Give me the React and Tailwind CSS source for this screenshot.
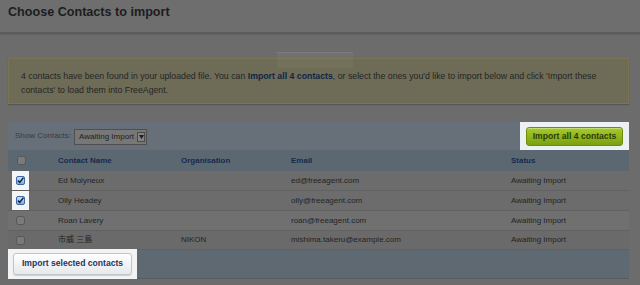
const contacts = [
  { name: 'Ed Molyneux', org: '', email: 'ed@freeagent.com', checked: true },
  { name: 'Olly Headey', org: '', email: 'olly@freeagent.com', checked: true },
  { name: 'Roan Lavery', org: '', email: 'roan@freeagent.com', checked: false },
  { name: '市威 三島', org: 'NIKON', email: 'mishima.takeru@example.com', checked: false },
];

function CheckBox({ checked }) {
  if (checked) {
    return (
      <svg width="9" height="9" viewBox="0 0 9 9">
        <defs>
          <linearGradient id="cbg" x1="0" y1="0" x2="0" y2="1">
            <stop offset="0" stopColor="#cfe2f8" />
            <stop offset="1" stopColor="#7fa9dc" />
          </linearGradient>
        </defs>
        <rect x="0.5" y="0.5" width="8" height="8" rx="1.5" fill="url(#cbg)" stroke="#3a68a8" />
        <path d="M2 4.6 L3.8 6.4 L7.4 1.6" fill="none" stroke="#142238" strokeWidth="1.5" />
      </svg>
    );
  }
  return (
    <svg width="9" height="9" viewBox="0 0 9 9">
      <rect x="0.5" y="0.5" width="8" height="8" rx="2" fill="#7a7a7a" stroke="#575757" />
    </svg>
  );
}

const cols = 'grid grid-cols-[50px_123px_110px_220px_1fr] items-center';

export default function App() {
  return (
    <div className="relative w-[640px] h-[285px] overflow-hidden bg-[#6c6c6c] text-[#242424] font-['Liberation_Sans','Noto_Sans_CJK_JP',sans-serif]">
      <header className="h-[33px] bg-[#6e6e6e] border-b border-[#5c5c5c] shadow-[0_1px_2px_rgba(0,0,0,0.25)] flex items-center px-2">
        <h1 className="text-[12.6px] font-bold text-[#1d1d1d] -mt-[8px]">Choose Contacts to import</h1>
      </header>

      {/* faint flash tab */}
      <div className="absolute left-[277px] top-[52px] w-[76px] h-[16px] bg-white/[0.04] border-t border-white/[0.08] z-10" />

      <div className="mx-2 mt-[25px] w-[621px] h-[46px] bg-[#6e6c56] border border-[#78754f] shadow-[0_1px_1px_rgba(0,0,0,0.2)] px-[12px] pt-[10px] text-[8.75px] leading-[14px] text-[#252525]">
        4 contacts have been found in your uploaded file. You can{' '}
        <span className="font-bold text-[#102548]">Import all 4 contacts</span>, or select the ones you'd like to import below and click 'Import these
        <br />
        contacts' to load them into FreeAgent.
      </div>

      <div className="ml-2 mt-[18px] w-[621px]">
        <div className="h-[28px] bg-[#677078] flex items-center justify-between pl-[7px]">
          <div className="flex items-center text-[8px] text-[#363c42]">
            <span>Show Contacts:</span>
            <div className="ml-[3px] mt-[1px] h-[16px] w-[73px] border border-[#4f4f4f] bg-[#777777] flex items-center justify-between pl-[4px] pr-[1px] text-[#1e1e1e]">
              <span>Awaiting Import</span>
              <span className="w-[8px] h-[10px] border border-[#4a4a4a] bg-[#838383] flex items-center justify-center">
                <svg width="5" height="4" viewBox="0 0 5 4"><path d="M0 0 H5 L2.5 4 Z" fill="#1e1e1e" /></svg>
              </span>
            </div>
          </div>
          <div className="relative z-20 h-[28px] w-[109px] bg-[#eef1f4] flex items-center justify-center">
            <button className="h-[19px] w-[97px] rounded-[3px] border border-[#6c8d0a] bg-gradient-to-b from-[#a6cb2a] to-[#7aa00e] text-[8.6px] font-bold text-[#2b3a0c] shadow-[inset_0_1px_0_rgba(255,255,255,0.35)]">
              Import all 4 contacts
            </button>
          </div>
        </div>

        <div className={`${cols} h-[21px] bg-[#5b6872] text-[8px] font-bold text-[#172a4c]`}>
          <div className="pl-[9px] flex"><CheckBox checked={false} /></div>
          <div>Contact Name</div>
          <div>Organisation</div>
          <div>Email</div>
          <div>Status</div>
        </div>

        {contacts.map((c, i) => (
          <div
            key={c.email}
            className={`${cols} text-[8px] text-[#242424] border-b border-[#616161] ${i === 3 ? 'h-[19px] bg-[#6a6a6a]' : 'h-[20px]'} ${i === 2 ? 'bg-[#707070]' : ''} ${i < 2 ? 'bg-[#6c6c6c]' : ''}`}
          >
            <div className="pl-[4px] flex">
              {c.checked ? (
                <div className="relative z-20 w-[17px] h-[19px] bg-[#f3f5f7] flex items-center justify-center">
                  <CheckBox checked />
                </div>
              ) : (
                <div className="w-[17px] h-[17px] flex items-center justify-center">
                  <CheckBox checked={false} />
                </div>
              )}
            </div>
            <div>{c.name}</div>
            <div>{c.org}</div>
            <div>{c.email}</div>
            <div>Awaiting Import</div>
          </div>
        ))}

        <div className="h-[29px] bg-[#5e6971] border-b border-[#555d63] flex items-center">
          <div className="h-[30px] w-[129px] bg-[#f1f3f5] flex items-center justify-center -mt-[1px]">
            <button className="h-[22px] w-[119px] rounded-[3px] border border-[#c2c6cb] bg-gradient-to-b from-white to-[#e6e8eb] text-[8.6px] font-bold text-[#1d3662] shadow-[0_1px_1px_rgba(0,0,0,0.15)]">
              Import selected contacts
            </button>
          </div>
        </div>
      </div>
    </div>
  );
}
